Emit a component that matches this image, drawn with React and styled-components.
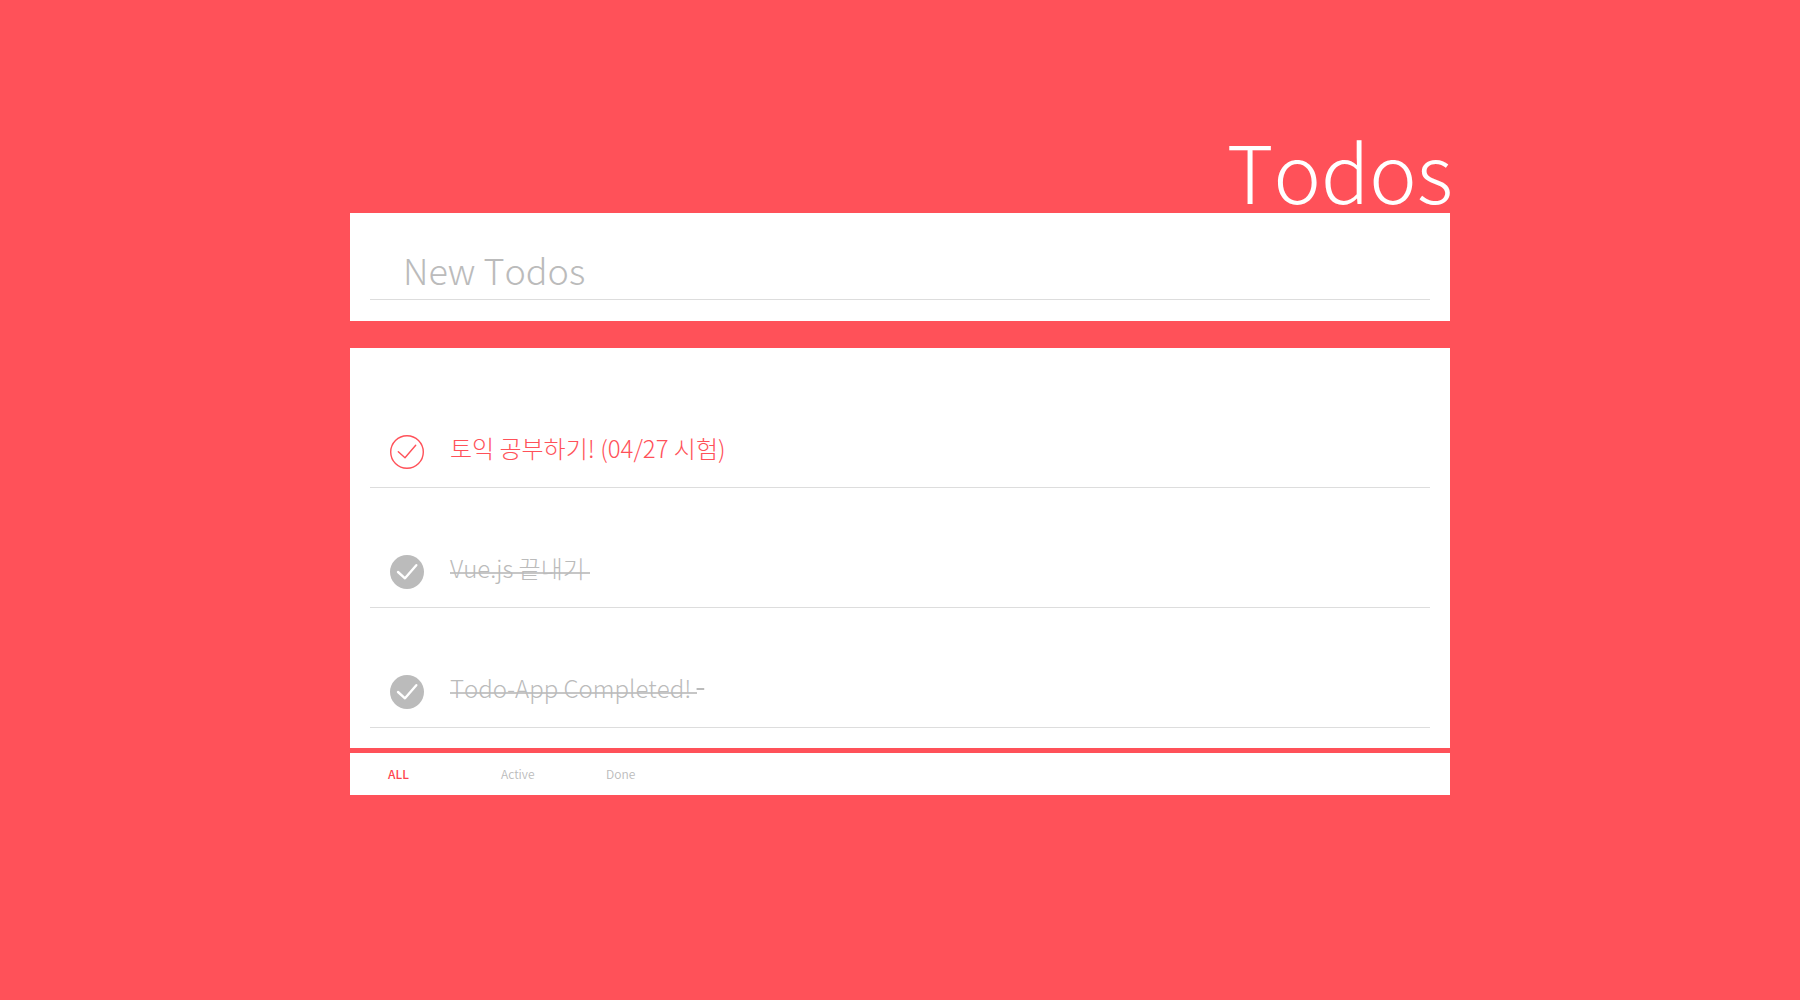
import React from "react";
import styled, { createGlobalStyle } from "styled-components";

const RED = "#ff5159";
const GRAY = "#bbbbbb";
const LINE = "#dddddd";

const GlobalStyle = createGlobalStyle`
  *, *::before, *::after { box-sizing: border-box; }
  body {
    margin: 0;
    background: ${RED};
    font-family: "Noto Sans CJK KR", sans-serif;
    font-weight: 300;
    font-kerning: none;
  }
`;

const Page = styled.main`
  width: 100%;
  max-width: 1100px;
  margin: 0 auto;
  padding: 129px 0 40px;
`;

const Title = styled.h1`
  margin: 0 -3px 4px 0;
  font-size: 80px;
  line-height: 80px;
  font-weight: 300;
  color: #fff;
  text-align: right;
`;

const NewTodo = styled.form`
  padding: 32px 20px 21px;
  background: #fff;
`;

const NewInput = styled.input`
  display: block;
  width: 100%;
  height: 55px;
  padding: 0 33px 6px;
  border: 0;
  border-bottom: 1px solid ${LINE};
  background: transparent;
  font: inherit;
  font-kerning: none;
  font-size: 36px;
  font-weight: 300;
  color: ${RED};
  outline: none;
  &::placeholder { color: ${GRAY}; opacity: 1; }
`;

const List = styled.ul`
  list-style: none;
  margin: 27px 0 5px;
  padding: 20px 20px;
  background: #fff;
`;

const Row = styled.li`
  height: 120px;
  display: flex;
  align-items: flex-end;
  border-bottom: 1px solid ${LINE};
  padding: 0 20px 18px;
`;

const Item = styled.label`
  display: flex;
  align-items: flex-start;
  gap: 26px;
  font-size: 24px;
  line-height: 26px;
  color: ${(p) => (p.$done ? GRAY : RED)};
  cursor: pointer;
`;

const Tick = styled.span`
  position: relative;
  width: 34px;
  height: 34px;
  flex: none;
  svg { display: block; }
`;

const TickInput = styled.input`
  position: absolute;
  inset: 0;
  width: 100%;
  height: 100%;
  margin: 0;
  opacity: 0;
  cursor: pointer;
`;

const Text = styled.span`
  white-space: pre;
`;

/* The strike line is a background band: it runs lower than the font's own line-through. */
const DoneText = styled.del`
  white-space: pre;
  text-decoration: none;
  background: linear-gradient(#c6c6c6, #c6c6c6) 0 22px / 100% 2px no-repeat;
`;

const Tail = styled.span`
  font-family: "DejaVu Sans", sans-serif;
  line-height: 1px;
  white-space: pre;
  text-decoration: line-through 2px;
  vertical-align: 2px;
`;

const Filters = styled.nav`
  display: flex;
  align-items: center;
  height: 42px;
  padding: 0 38px;
  background: #fff;
`;

const Filter = styled.button`
  padding: 0;
  border: 0;
  background: none;
  font-family: inherit;
  font-size: 12px;
  line-height: 18px;
  font-weight: ${(p) => (p.$active ? 500 : 350)};
  color: ${(p) => (p.$active ? "#ff444e" : GRAY)};
  text-align: left;
  cursor: pointer;
  width: ${(p) => p.$width}px;
`;

function TickIcon({ done }) {
  return (
    <svg width="34" height="34" viewBox="0 0 34 34" fill="none" aria-hidden="true">
      <circle cx="17" cy="17" r={done ? 17 : 16.3} fill={done ? GRAY : "none"} stroke={done ? "none" : RED} strokeWidth="1.4" />
      <path
        d={done ? "M8 17 L15 23.3 L26.3 10.2" : "M8.3 16.7 L15 22.7 L25.7 10.3"}
        stroke={done ? "#fff" : RED}
        strokeWidth={done ? 2.4 : 1.4}
        strokeLinecap="round"
        strokeLinejoin="round"
      />
    </svg>
  );
}

const todos = [
  { id: 1, text: "토익 공부하기! (04/27 시험)", done: false },
  { id: 2, text: "Vue.js 끝내기 ", done: true },
  { id: 3, text: "Todo-App Completed! ", tail: " ", done: true },
];

const filters = [
  { name: "ALL", width: 113 },
  { name: "Active", width: 105 },
  { name: "Done", width: 60 },
];

export default function App() {
  return (
    <>
      <GlobalStyle />
      <Page>
        <Title>Todos</Title>
        <NewTodo onSubmit={(e) => e.preventDefault()}>
          <NewInput type="text" placeholder="New Todos" aria-label="New Todos" />
        </NewTodo>
        <List>
          {todos.map((t) => (
            <Row key={t.id}>
              <Item $done={t.done}>
                <Tick>
                  <TickInput type="checkbox" defaultChecked={t.done} />
                  <TickIcon done={t.done} />
                </Tick>
                <span>
                  {t.done ? <DoneText>{t.text}</DoneText> : <Text>{t.text}</Text>}
                  {t.tail && <Tail>{t.tail}</Tail>}
                </span>
              </Item>
            </Row>
          ))}
        </List>
        <Filters aria-label="Filter">
          {filters.map((f, i) => (
            <Filter key={f.name} type="button" $active={i === 0} $width={f.width}>
              {f.name}
            </Filter>
          ))}
        </Filters>
      </Page>
    </>
  );
}
